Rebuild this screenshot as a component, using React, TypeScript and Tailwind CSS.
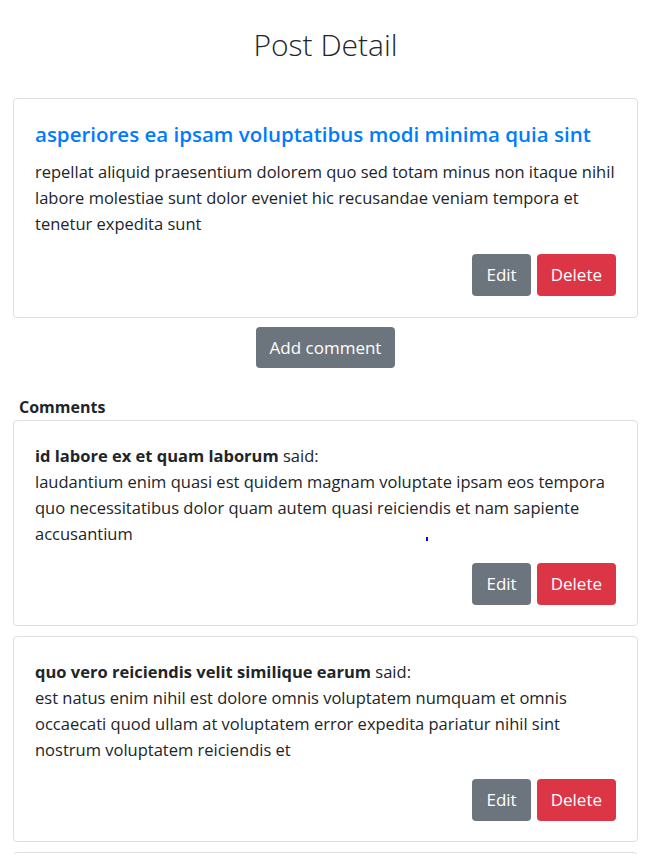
import React from "react";

const font = { fontFamily: '"Open Sans", "Noto Sans", sans-serif' };

function Buttons() {
  return (
    <div className="flex justify-end gap-[6px]">
      <button className="h-[42px] px-[14px] rounded-[4px] bg-[#6c757d] text-white text-[17px]">Edit</button>
      <button className="h-[42px] px-[14px] rounded-[4px] bg-[#dc3545] text-white text-[17px]">Delete</button>
    </div>
  );
}

function Comment({ name, lines, dot }: { name: string; lines: string[]; dot?: boolean }) {
  return (
    <div className="relative border border-[#dfdfdf] rounded-[4px] px-[21px] pt-[22px] pb-[20px]">
      <div className="text-[16.5px] leading-[26px] text-[#212529]">
        <div className="whitespace-nowrap"><span className="font-bold">{name}</span> said:</div>
        {lines.map((l) => (
          <div key={l} className="whitespace-nowrap">{l}</div>
        ))}
      </div>
      {dot && <div className="absolute left-[412px] top-[116px] w-[2px] h-[4px] bg-[#0000ff]" />}
      <div className="mt-[16px]">
        <Buttons />
      </div>
    </div>
  );
}

export default function App() {
  return (
    <div className="bg-white h-[854px] overflow-hidden pl-[13px] pr-[22px] text-[#212529]" style={font}>
      <h1 className="text-center text-[30px] font-light leading-[40px] pt-[25px] pb-[33px]">Post Detail</h1>
      <div className="border border-[#dfdfdf] rounded-[4px] px-[21px] pt-[22px] pb-[21px]">
        <h2 className="text-[20.5px] font-semibold leading-[26px] text-[#007bff] whitespace-nowrap">asperiores ea ipsam voluptatibus modi minima quia sint</h2>
        <div className="mt-[12px] text-[16.5px] leading-[26px]">
          <div className="whitespace-nowrap">repellat aliquid praesentium dolorem quo sed totam minus non itaque nihil</div>
          <div className="whitespace-nowrap">labore molestiae sunt dolor eveniet hic recusandae veniam tempora et</div>
          <div className="whitespace-nowrap">tenetur expedita sunt</div>
        </div>
        <div className="mt-[17px]">
          <Buttons />
        </div>
      </div>
      <div className="flex justify-center mt-[9px]">
        <button className="h-[41px] px-[14px] rounded-[4px] bg-[#6c757d] text-white text-[17px]">Add comment</button>
      </div>
      <div className="mt-[28px] pl-[6px] font-bold text-[16px] leading-[22px]">Comments</div>
      <div className="flex flex-col gap-[10px] mt-[2px]">
        <Comment
          name="id labore ex et quam laborum"
          dot
          lines={[
            "laudantium enim quasi est quidem magnam voluptate ipsam eos tempora",
            "quo necessitatibus dolor quam autem quasi reiciendis et nam sapiente",
            "accusantium",
          ]}
        />
        <Comment
          name="quo vero reiciendis velit similique earum"
          lines={[
            "est natus enim nihil est dolore omnis voluptatem numquam et omnis",
            "occaecati quod ullam at voluptatem error expedita pariatur nihil sint",
            "nostrum voluptatem reiciendis et",
          ]}
        />
        <div className="border border-[#dfdfdf] rounded-[4px] h-[40px]" />
      </div>
    </div>
  );
}
